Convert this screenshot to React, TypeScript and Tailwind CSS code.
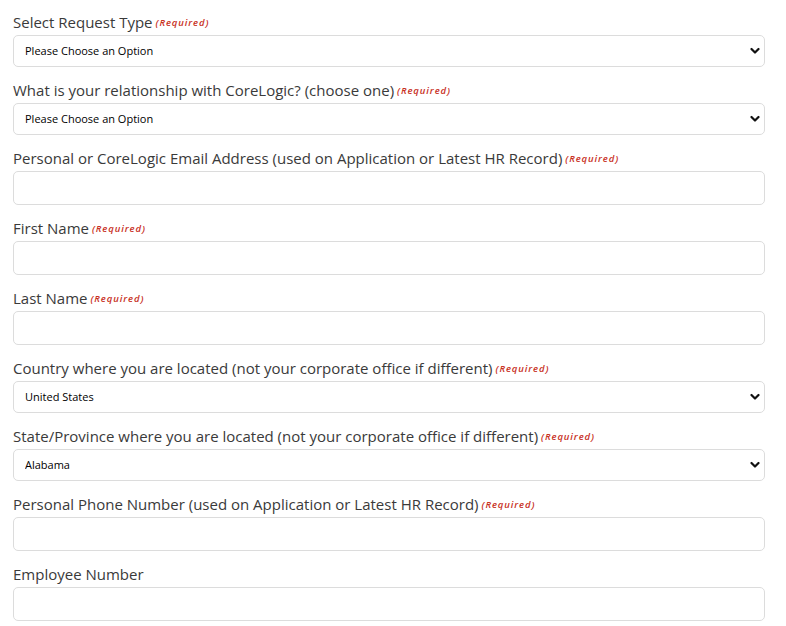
import React from 'react';

type Field = {
  label: string;
  required?: boolean;
  kind: 'select' | 'text';
  value?: string;
};

const fields: Field[] = [
  { label: 'Select Request Type', required: true, kind: 'select', value: 'Please Choose an Option' },
  { label: 'What is your relationship with CoreLogic? (choose one)', required: true, kind: 'select', value: 'Please Choose an Option' },
  { label: 'Personal or CoreLogic Email Address (used on Application or Latest HR Record)', required: true, kind: 'text' },
  { label: 'First Name', required: true, kind: 'text' },
  { label: 'Last Name', required: true, kind: 'text' },
  { label: 'Country where you are located (not your corporate office if different)', required: true, kind: 'select', value: 'United States' },
  { label: 'State/Province where you are located (not your corporate office if different)', required: true, kind: 'select', value: 'Alabama' },
  { label: 'Personal Phone Number (used on Application or Latest HR Record)', required: true, kind: 'text' },
  { label: 'Employee Number', kind: 'text' },
];

function Chevron() {
  return (
    <svg
      className="pointer-events-none absolute right-[5px] top-1/2 -translate-y-1/2"
      width="10"
      height="7"
      viewBox="0 0 10 7"
      fill="none"
    >
      <path d="M1.5 1.5 L5 5 L8.5 1.5" stroke="#111" strokeWidth="2.2" strokeLinecap="round" strokeLinejoin="round" />
    </svg>
  );
}

function FormRow({ field }: { field: Field }) {
  return (
    <div className="flex flex-col">
      <label className="flex h-5 items-center text-[15px] leading-5 text-[#3a3a3a]">
        <span>{field.label}</span>
        {field.required && (
          <span className="ml-[3px] mt-[2px] text-[9.5px] font-semibold italic tracking-[0.9px] text-[#c8301e]">
            (Required)
          </span>
        )}
      </label>
      {field.kind === 'select' ? (
        <div className="relative mt-[3px]">
          <select
            defaultValue={field.value}
            className="h-8 w-full appearance-none rounded-[5px] border border-[#dcdcdc] bg-white pl-[11px] text-[11px] text-black outline-none"
          >
            <option>{field.value}</option>
          </select>
          <Chevron />
        </div>
      ) : (
        <input
          type="text"
          className="mt-[3px] h-[34px] w-full rounded-[5px] border border-[#dcdcdc] bg-white px-3 text-[13px] outline-none"
        />
      )}
    </div>
  );
}

export default function App() {
  return (
    <div
      className="min-h-screen bg-white pl-[13px] pt-[12px]"
      style={{ fontFamily: '"Open Sans", "Liberation Sans", sans-serif' }}
    >
      <div className="flex w-[752px] flex-col gap-[13px]">
        {fields.map((f) => (
          <FormRow key={f.label} field={f} />
        ))}
      </div>
    </div>
  );
}
